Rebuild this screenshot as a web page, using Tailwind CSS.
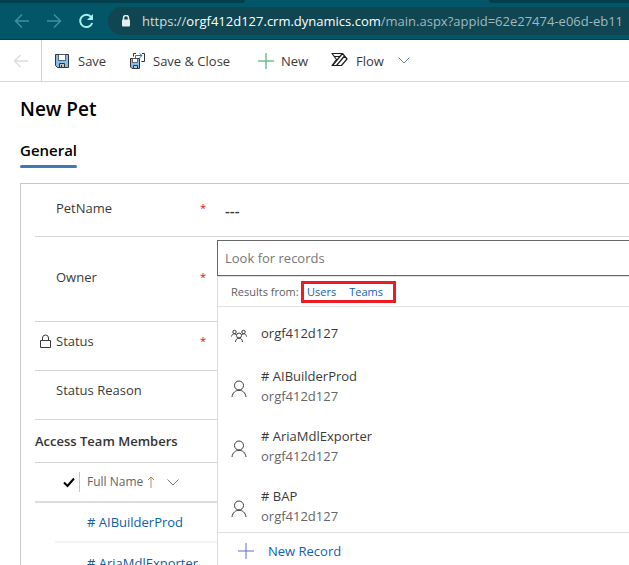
<!DOCTYPE html>
<html lang="en">
<head>
<meta charset="utf-8">
<meta name="viewport" content="width=device-width, initial-scale=1">
<title>New Pet</title>
<script src="https://cdn.jsdelivr.net/npm/@tailwindcss/browser@4"></script>
</head>
<body class="h-screen overflow-hidden bg-white font-['Segoe_UI','Open_Sans','Noto_Sans',sans-serif] text-[13px] leading-5 text-[#3b3a39]">

<header class="flex h-10 flex-col border-b border-[#043f4c] bg-[#035667]">
  <div class="flex h-[3px] shrink-0 justify-between">
    <div class="w-[245px] rounded-br-lg bg-[#03404d]"></div>
    <div class="w-[140px] rounded-bl-lg bg-[#03404d]"></div>
  </div>
  <div class="flex flex-1 items-center">
    <nav class="flex w-[108px] shrink-0 items-center gap-4 pl-[14px]" aria-label="Browser">
      <button type="button" aria-label="Back" class="text-[#3c929c]"><svg class="size-4" viewBox="0 0 16 16" fill="none" stroke="currentColor" stroke-width="1.5"><path d="M15 8H2M8 1.500L1.500 8L8 14.500"/></svg></button>
      <button type="button" aria-label="Forward" class="text-[#3c929c]"><svg class="size-4" viewBox="0 0 16 16" fill="none" stroke="currentColor" stroke-width="1.5"><path d="M1 8H14M8 1.500L14.500 8L8 14.500"/></svg></button>
      <button type="button" aria-label="Reload" class="text-[#a5f0ee]"><svg class="size-4" viewBox="0 0 16 16"><path d="M13.200 4A6.200 6.200 0 1 0 14.200 10" fill="none" stroke="currentColor" stroke-width="2"/><path d="M15 1V7H9Z" fill="currentColor"/></svg></button>
    </nav>
    <div class="flex h-7 min-w-0 flex-1 items-center gap-[10px] rounded-l-full bg-[#104652] pl-3 whitespace-nowrap text-[#9fb9bf]">
      <svg class="h-3 w-3 shrink-0 text-[#e6eeef]" viewBox="0 0 12 12" fill="none"><path d="M3.500 6V3A2.500 2.500 0 0 1 8.500 3V6" stroke="currentColor" stroke-width="1.500"/><rect x="2" y="4.500" width="8" height="7" rx="1" fill="currentColor"/></svg>
      <div class="min-w-0 flex-1 overflow-hidden"><span class="text-[#cfdcdf]">https://</span><span class="text-white">orgf412d127.crm.dynamics.com</span>/main.aspx?appid=62e27474-e06d-eb11</div>
    </div>
  </div>
</header>

<div class="flex h-[42px] items-center border-b border-[#d8d8d8]" role="toolbar" aria-label="Commands">
  <button type="button" aria-label="Go back" class="flex h-full w-[42px] items-center justify-center border-r border-[#d2d0ce] text-[#dcdcdc]"><svg class="size-4" viewBox="0 0 16 16" fill="none" stroke="currentColor" stroke-width="1.300"><path d="M15 8H2M7.500 2L1.500 8L7.500 14"/></svg></button>
  <button type="button" class="ml-3 flex w-[75px] items-center gap-2 whitespace-nowrap">
    <svg class="size-4" viewBox="0 0 16 16"><path d="M1.500 1.500H14.500V14.500H3.500L1.500 12.500Z" fill="#83beec" stroke="#33333d"/><path d="M4.500 1.500H11.500V7.500H4.500Z" fill="#fff" stroke="#33333d" stroke-width=".7"/><path d="M5.500 10.500H10.500V14.500H5.500Z" fill="#c8c6c4" stroke="#33333d"/><path d="M7.500 12V14.500" stroke="#33333d"/></svg>
    Save
  </button>
  <button type="button" class="flex w-[129px] items-center gap-2 whitespace-nowrap">
    <svg class="size-4" viewBox="0 0 16 16"><path d="M4.500 3.500V.5H7M13 .5H15.500V8.500H12.500" fill="none" stroke="#33333d"/><path d="M6.500 5V2.500H13M10.500 0.500L13 2.500L10.500 5" fill="none" stroke="#2b73bd"/><path d="M1.500 5.500H10.500V15.500H3L1.500 14Z" fill="#83beec" stroke="#33333d"/><path d="M3.500 5.500H8.500V9.500H3.500Z" fill="#fff" stroke="#33333d" stroke-width=".7"/><path d="M4.500 12.500H8.500V15.500H4.500Z" fill="#c8c6c4" stroke="#33333d"/></svg>
    Save &amp; Close
  </button>
  <button type="button" class="flex w-[73px] items-center gap-[7px] whitespace-nowrap">
    <svg class="size-4" viewBox="0 0 16 16" stroke="#6dc08e" stroke-width="1.500"><path d="M8 0V16M0 8H16"/></svg>
    New
  </button>
  <button type="button" class="flex items-center gap-2 whitespace-nowrap">
    <svg class="size-[17px]" viewBox="0 0 17 17" fill="none" stroke="#201f1e" stroke-width="1.200" stroke-linejoin="round"><path d="M1 1.500H11.500L16 7L10.500 13.500H1L5.500 7.500ZM11.500 1.500L1.500 13.500M13.500 4L5.500 13.500M3.500 4.500H9"/></svg>
    Flow
    <svg class="ml-1 size-4" viewBox="0 0 16 16" fill="none" stroke="#6b8299"><path d="M2.500 4.500L8 10L13.500 4.500"/></svg>
  </button>
</div>

<main class="pl-5">
  <h1 class="pt-[14px] text-[19px] leading-[26px] font-semibold text-black">New Pet</h1>
  <div class="flex pt-[18px]" role="tablist">
    <button type="button" role="tab" aria-selected="true" class="flex flex-col text-[15px] leading-5 font-semibold text-black">General<span class="mt-[5px] h-[3px] w-full rounded-full bg-[#3b79b7]"></span></button>
  </div>

  <section class="mt-[15px] border-t border-l border-[#c8c8c8] pl-[14px]">
    <form>
      <div class="flex h-[53px] items-center border-b border-[#d6d6d6]">
        <label for="petname" class="flex w-[182px] shrink-0 items-center pr-[11px] pb-1 pl-[21px]"><span class="flex-1">PetName</span><span class="text-[11px] text-[#e00b1c]">*</span></label>
        <input id="petname" value="---" class="min-w-0 flex-1 pl-2 text-[15px] font-semibold outline-none">
      </div>

      <div class="flex h-[85px] border-b border-[#d6d6d6]">
        <label for="owner" class="flex w-[182px] shrink-0 items-center pr-[11px] pb-1 pl-[21px]"><span class="flex-1">Owner</span><span class="text-[11px] text-[#e00b1c]">*</span></label>
        <div class="relative min-w-0 flex-1">
          <div class="absolute inset-x-0 top-[3px] z-10 border-l border-[#dcdcdc] bg-white">
            <input id="owner" placeholder="Look for records" class="-ml-px block h-9 w-[calc(100%+1px)] border border-r-0 border-[#666] px-[7px] outline-none placeholder:text-[#767676]">
            <div class="flex h-[31px] items-center border-y border-[#e1e1e1] pl-[13px] text-[11px]">
              <span class="w-[70px] whitespace-nowrap text-[#605e5c]">Results from:</span>
              <div class="flex h-[22px] w-[95px] items-center gap-[13px] border-3 border-[#ec1c24] pl-[3px] text-[#1160b7]"><a href="#users">Users</a><a href="#teams">Teams</a></div>
            </div>
            <ul>
              <li class="flex h-[49px] items-center gap-[14px] pt-[2px] pl-[13px]">
                <svg class="mt-[6px] size-4" viewBox="0 0 16 16" fill="none" stroke="#3b3a39"><circle cx="8" cy="7.500" r="2.500"/><circle cx="3.500" cy="4" r="1.700"/><circle cx="12.500" cy="4" r="1.700"/><path d="M4.500 14C4.500 9 11.500 9 11.500 14M.500 8.500C1 5.500 4 5 5.500 7M15.500 8.500C15 5.500 12 5 10.500 7"/></svg>
                <span>orgf412d127</span>
              </li>
              <li class="flex h-[60px] items-center gap-[14px] pl-[13px]">
                <svg class="mt-[6px] h-[18px] w-4" viewBox="0 0 16 18" fill="none" stroke="#3b3a39"><circle cx="8" cy="5.500" r="4.500"/><path d="M1 17C2 8 14 8 15 17"/></svg>
                <div><div>#&nbsp;AIBuilderProd</div><div class="text-[#666]">orgf412d127</div></div>
              </li>
              <li class="flex h-[60px] items-center gap-[14px] pl-[13px]">
                <svg class="mt-[6px] h-[18px] w-4" viewBox="0 0 16 18" fill="none" stroke="#3b3a39"><circle cx="8" cy="5.500" r="4.500"/><path d="M1 17C2 8 14 8 15 17"/></svg>
                <div><div>#&nbsp;AriaMdlExporter</div><div class="text-[#666]">orgf412d127</div></div>
              </li>
              <li class="flex h-[60px] items-center gap-[14px] pl-[13px]">
                <svg class="mt-[6px] h-[18px] w-4" viewBox="0 0 16 18" fill="none" stroke="#3b3a39"><circle cx="8" cy="5.500" r="4.500"/><path d="M1 17C2 8 14 8 15 17"/></svg>
                <div><div>#&nbsp;BAP</div><div class="text-[#666]">orgf412d127</div></div>
              </li>
            </ul>
            <button type="button" class="-mt-1 flex h-9 w-full items-center gap-[14px] border-t border-[#e1e1e1] pl-[20px] text-[#1160b7]">
              <svg class="size-4" viewBox="0 0 16 16" stroke="#5b6fc0"><path d="M8 0V16M0 8H16"/></svg>
              New Record
            </button>
          </div>
        </div>
      </div>

      <div class="flex h-[49px] items-center border-b border-[#d6d6d6] pb-[10px]">
        <svg class="ml-1 h-[15px] w-[13px] shrink-0" viewBox="0 0 13 15" fill="none" stroke="#3b3a39"><path d="M1.500 6.500H11.500V13.500H1.500ZM3.500 6.500V4A3 3 0 0 1 9.500 4V6.500"/></svg>
        <span class="flex w-[165px] shrink-0 items-center pr-[11px] pl-1"><span class="flex-1">Status</span><span class="text-[11px] text-[#e00b1c]">*</span></span>
      </div>
      <div class="flex h-[49px] items-center border-b border-[#d6d6d6] pb-[10px] pl-[21px]">Status Reason</div>
    </form>

    <h2 class="flex h-[43px] items-center border-b border-[#d6d6d6] font-semibold text-[#333]">Access Team Members</h2>
    <table class="w-full border-separate border-spacing-0 text-left">
      <thead>
        <tr class="h-10">
          <th class="w-[45px] border-b-2 border-[#dcdcdc] p-0"><div class="flex h-5 items-center justify-end border-r border-[#c8c8c8] pr-1"><svg class="h-3 w-3" viewBox="0 0 12 12" fill="none" stroke="#000" stroke-width="2"><path d="M1 6.500L4.500 10L11 2.500"/></svg></div></th>
          <th class="border-b-2 border-[#dcdcdc] p-0 pl-[7px] text-[12px] font-normal text-[#666]"><div class="flex items-center">Full Name
            <svg class="ml-1 h-3 w-2" viewBox="0 0 8 12" fill="none" stroke="#c78b5a"><path d="M4 12V1M1 4L4 1L7 4"/></svg>
            <svg class="ml-[11px] size-[14px]" viewBox="0 0 14 14" fill="none" stroke="#777"><path d="M1.500 4.500L7 10L12.500 4.500"/></svg></div></th>
        </tr>
      </thead>
      <tbody class="text-[#115ea3]">
        <tr class="h-10">
          <td class="p-0 align-bottom"><div class="ml-5 border-b-2 border-[#f3f3f3]"></div></td>
          <td class="border-b-2 border-[#f3f3f3] p-0 pl-[7px]"><a href="#aibuilderprod">#&nbsp;AIBuilderProd</a></td>
        </tr>
        <tr class="h-10">
          <td class="p-0"></td>
          <td class="p-0 pl-[7px]"><a href="#ariamdlexporter">#&nbsp;AriaMdlExporter</a></td>
        </tr>
      </tbody>
    </table>
  </section>
</main>
</body>
</html>
